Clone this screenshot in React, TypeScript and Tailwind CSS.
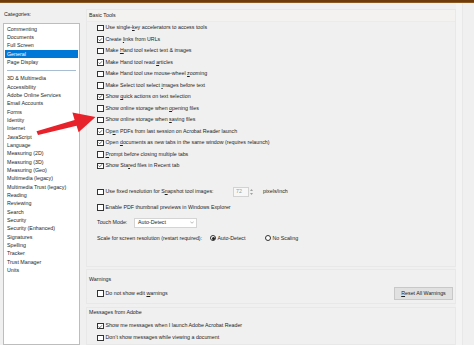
import React from "react";

const font = { fontFamily: '"Liberation Sans", Arial, sans-serif' };

function Check({ checked }: { checked?: boolean }) {
  return (
    <span className="w-[6.5px] h-[6.5px] border-[0.8px] border-[#333] bg-white flex items-center justify-center shrink-0">
      {checked && (
        <svg width="5" height="5" viewBox="0 0 10 10">
          <path d="M1.5 5.2 L4 7.7 L8.7 2.3" stroke="#222" strokeWidth="1.4" fill="none" />
        </svg>
      )}
    </span>
  );
}

function U({ children }: { children: React.ReactNode }) {
  return <span className="underline decoration-[0.5px] underline-offset-[0.5px]">{children}</span>;
}

function CheckRow({ checked, children, h = "h-[11.5px]" }: { checked?: boolean; children: React.ReactNode; h?: string }) {
  return (
    <div className={`${h} flex items-center gap-[2px] pl-[10px]`}>
      <Check checked={checked} />
      <span className="whitespace-nowrap">{children}</span>
    </div>
  );
}

const cats1 = ["Commenting", "Documents", "Full Screen", "General", "Page Display"];
const cats2 = [
  "3D & Multimedia",
  "Accessibility",
  "Adobe Online Services",
  "Email Accounts",
  "Forms",
  "Identity",
  "Internet",
  "JavaScript",
  "Language",
  "Measuring (2D)",
  "Measuring (3D)",
  "Measuring (Geo)",
  "Multimedia (legacy)",
  "Multimedia Trust (legacy)",
  "Reading",
  "Reviewing",
  "Search",
  "Security",
  "Security (Enhanced)",
  "Signatures",
  "Spelling",
  "Tracker",
  "Trust Manager",
  "Units",
];

export default function App() {
  return (
    <div className="relative w-[474px] h-[345px] overflow-hidden bg-[#f0f0f0] text-[#1e1e1e] text-[5.3px] leading-none" style={font}>
      <div className="h-[3px] bg-[#6e3c0c] border-b border-[#8a5a22]" />
      <div className="flex h-[342px]">
        {/* left */}
        <div className="w-[86px] shrink-0 pl-[3px] flex flex-col">
          <div className="h-[20px] flex items-center pl-[1px] pt-[4px]">Categories:</div>
          <div className="w-[77px] flex-1 bg-white border border-[#bdbdbd] pt-[1px] px-[1px]">
            {cats1.map((c) => (
              <div
                key={c}
                className={`h-[8.33px] flex items-center pl-[2px] whitespace-nowrap ${c === "General" ? "bg-[#0078d7] text-white" : ""}`}
              >
                {c}
              </div>
            ))}
            <div className="h-[8.33px] flex items-center px-[2px]">
              <div className="h-[1px] w-full bg-[#a8bcd4]" />
            </div>
            {cats2.map((c) => (
              <div key={c} className="h-[8.33px] flex items-center pl-[2px] whitespace-nowrap">
                {c}
              </div>
            ))}
          </div>
        </div>

        {/* right */}
        <div className="w-[370px] shrink-0 flex flex-col">
          <div className="mt-[6px] h-[260px] border border-[#e8e8e8] flex flex-col">
            <div className="h-[12px] flex items-center pl-[2px] bg-[#f4f2f1] border-b border-[#ebebeb]">Basic Tools</div>
            <div className="flex flex-col">
              <CheckRow>Use single-<U>k</U>ey accelerators to access tools</CheckRow>
              <CheckRow checked>Create <U>l</U>inks from URLs</CheckRow>
              <CheckRow>Make <U>H</U>and tool select text &amp; images</CheckRow>
              <CheckRow checked>Make Hand tool read <U>a</U>rticles</CheckRow>
              <CheckRow>Make Hand tool use mouse-wheel <U>z</U>ooming</CheckRow>
              <CheckRow>Make Select tool select <U>i</U>mages before text</CheckRow>
              <CheckRow checked>Show <U>q</U>uick actions on text selection</CheckRow>
              <CheckRow>Show online storage when <U>o</U>pening files</CheckRow>
              <CheckRow>Show online storage when <U>s</U>aving files</CheckRow>
              <CheckRow checked>Op<U>e</U>n PDFs from last session on Acrobat Reader launch</CheckRow>
              <CheckRow checked>Open <U>d</U>ocuments as new tabs in the same window (requires relaunch)</CheckRow>
              <CheckRow><U>P</U>rompt before closing multiple tabs</CheckRow>
              <CheckRow checked>Show Sta<U>r</U>ed files in Recent tab</CheckRow>
            </div>
            <div className="mt-[12.5px] flex flex-col">
              <div className="h-[15.5px] flex items-center pl-[10px]">
                <div className="w-[136px] flex items-center gap-[2px]">
                  <Check />
                  <span className="whitespace-nowrap">Use fixed resolution for S<U>n</U>apshot tool images:</span>
                </div>
                <div className="flex items-center h-[10px]">
                  <div className="w-[16px] h-[10px] border border-[#d2d2d2] bg-[#f7f7f7] text-[#9a9a9a] flex items-center pl-[2px]">72</div>
                  <div className="w-[5px] h-[10px] flex flex-col items-center justify-center gap-[1.5px]">
                    <svg width="3" height="2" viewBox="0 0 6 4"><path d="M0 4 L3 0 L6 4Z" fill="#a0a0a0" /></svg>
                    <svg width="3" height="2" viewBox="0 0 6 4"><path d="M0 0 L3 4 L6 0Z" fill="#a0a0a0" /></svg>
                  </div>
                </div>
                <span className="ml-[9px] whitespace-nowrap">pixels/inch</span>
              </div>
              <CheckRow h="h-[15.5px]">Enable PDF thumbnail previews in Windows Explorer</CheckRow>
              <div className="h-[15.5px] flex items-center pl-[10px]">
                <span className="w-[37px] whitespace-nowrap">Touch Mode:</span>
                <div className="w-[63px] h-[10px] bg-white border border-[#d4d4d4] flex items-center justify-between pl-[3px] pr-[2px]">
                  <span>Auto-Detect</span>
                  <svg width="4" height="3" viewBox="0 0 8 5"><path d="M0.5 0.5 L4 4 L7.5 0.5" stroke="#777" strokeWidth="1" fill="none" /></svg>
                </div>
              </div>
              <div className="h-[15.5px] flex items-center pl-[10px]">
                <span className="w-[113px] whitespace-nowrap">Scale for screen resolution (restart required):</span>
                <div className="w-[55px] flex items-center gap-[1.5px]">
                  <span className="w-[6px] h-[6px] rounded-full border-[0.8px] border-[#333] bg-white flex items-center justify-center">
                    <span className="w-[3px] h-[3px] rounded-full bg-[#222]" />
                  </span>
                  <span>Auto-Detect</span>
                </div>
                <div className="flex items-center gap-[1.5px]">
                  <span className="w-[6px] h-[6px] rounded-full border-[0.8px] border-[#333] bg-white" />
                  <span>No Scaling</span>
                </div>
              </div>
            </div>
          </div>

          <div className="mt-[2px] h-[35px] border border-[#e8e8e8] flex flex-col">
            <div className="h-[14px] flex items-center pl-[2px] pt-[4px]">Warnings</div>
            <div className="flex-1 flex items-center justify-between pr-[2px]">
              <CheckRow>Do not show edit <U>w</U>arnings</CheckRow>
              <div className="w-[59px] h-[13px] bg-[#e1e1e1] border border-[#c8c8c8] flex items-center justify-center">
                <span><U>R</U>eset All Warnings</span>
              </div>
            </div>
          </div>

          <div className="mt-[3px] flex-1 border border-[#e8e8e8] flex flex-col">
            <div className="h-[10px] flex items-center pl-[2px]">Messages from Adobe</div>
            <div className="mt-[2px]">
              <CheckRow h="h-[12px]" checked>Show me messages when I launch Adobe Acrobat Reader</CheckRow>
              <CheckRow h="h-[12px]">Don’t show messages while viewing a document</CheckRow>
            </div>
          </div>
        </div>

        <div className="w-[6px] bg-[#f4f4f4]" />
        <div className="flex-1 bg-[#f0f0f0] border-l border-[#e8e8e8]" />
      </div>

      <svg className="absolute inset-0 pointer-events-none" width="474" height="345" viewBox="0 0 474 345">
        <polygon
          points="36.5,131.2 74.6,119.9 72.4,112.4 95.5,117 78.6,132.2 76.6,125.8 38,135"
          fill="#e8222a"
        />
      </svg>
    </div>
  );
}
